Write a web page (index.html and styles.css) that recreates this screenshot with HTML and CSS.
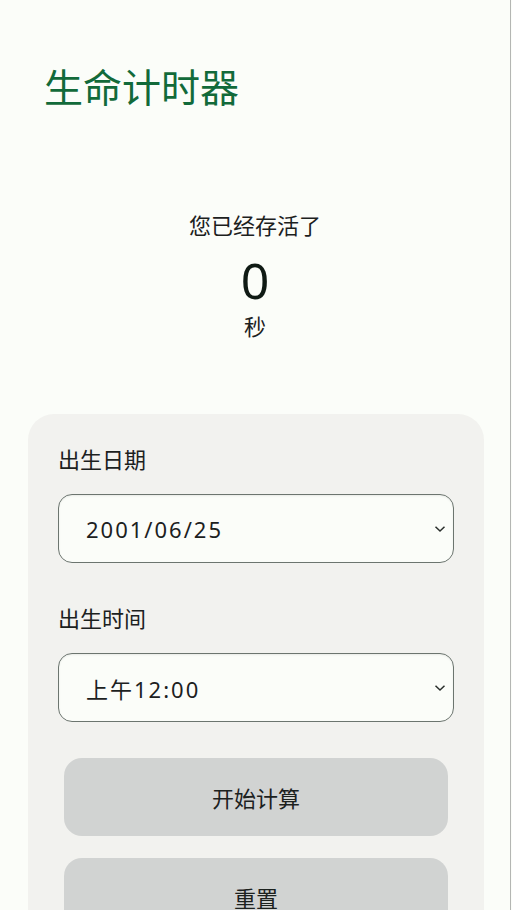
FILE: index.html
```html
<!DOCTYPE html>
<html lang="zh-CN">
<head>
<meta charset="utf-8"/>
<meta name="viewport" content="width=device-width, initial-scale=1.0"/>
<title>生命计时器</title>
<link rel="stylesheet" href="styles.css">
</head>
<body>
  <div class="app">
    <h1 class="title">生命计时器</h1>
    <div class="counter">
      <p class="counter-label">您已经存活了</p>
      <p class="counter-value" id="seconds">0</p>
      <p class="counter-unit">秒</p>
    </div>
    <div class="panel">
      <label class="field-label">出生日期</label>
      <div class="select-box">
        <span>2001/06/25</span>
        <svg class="chevron" width="12" height="8" viewBox="0 0 12 8"><path d="M1.5 1.8 L6 6 L10.5 1.8" fill="none" stroke="#2a2f2c" stroke-width="1.5"/></svg>
      </div>
      <label class="field-label">出生时间</label>
      <div class="select-box">
        <span>上午12:00</span>
        <svg class="chevron" width="12" height="8" viewBox="0 0 12 8"><path d="M1.5 1.8 L6 6 L10.5 1.8" fill="none" stroke="#2a2f2c" stroke-width="1.5"/></svg>
      </div>
      <button class="action-button">开始计算</button>
      <button class="action-button">重置</button>
    </div>
  </div>
</body>
</html>
```

FILE: styles.css
```css
html, body {
  margin: 0;
  padding: 0;
  height: 100%;
  overflow: hidden;
  background: #fbfdf9;
}
body {
  font-family: "Noto Sans", "Noto Sans CJK SC", sans-serif;
  color: #1c211e;
}
.app {
  width: 511px;
  min-height: 100%;
  border-right: 1px solid #b4b6b3;
  box-sizing: border-box;
  padding: 0 28px;
}
.title {
  margin: 0;
  padding: 62px 0 0 16px;
  font-size: 39px;
  font-weight: 400;
  line-height: 50px;
  color: #126a3a;
}
.counter {
  text-align: center;
  margin-top: 97px;
}
.counter p {
  margin: 0;
}
.counter-label {
  font-size: 22px;
  line-height: 32px;
}
.counter-value {
  margin-top: 9px !important;
  font-size: 50px;
  line-height: 60px;
  color: #0f1a14;
}
.counter-unit {
  margin-top: 1px !important;
  font-size: 22px;
  line-height: 30px;
}
.panel {
  margin-top: 73px;
  width: 456px;
  background: #f2f2ef;
  border-radius: 26px;
  padding: 30px 30px 40px 30px;
  box-sizing: border-box;
  display: flex;
  flex-direction: column;
}
.field-label {
  font-size: 22px;
  line-height: 30px;
  color: #1c211e;
}
.select-box {
  margin-top: 20px;
  margin-bottom: 40px;
  height: 69px;
  border: 1.5px solid #6c756f;
  border-radius: 14px;
  background: #fbfdf9;
  box-sizing: border-box;
  display: flex;
  align-items: center;
  justify-content: space-between;
  padding: 0 7px 0 27px;
  font-size: 22px;
  letter-spacing: 2px;
  box-shadow: inset 0 1px 2px rgba(0,0,0,0.08);
}
.action-button {
  margin: 0 6px 22px 6px;
  height: 78px;
  border: none;
  border-radius: 18px;
  background: #d1d3d2;
  font-family: inherit;
  font-size: 22px;
  color: #1c211e;
}
.panel .select-box:last-of-type {
  margin-bottom: 36px;
}
```
